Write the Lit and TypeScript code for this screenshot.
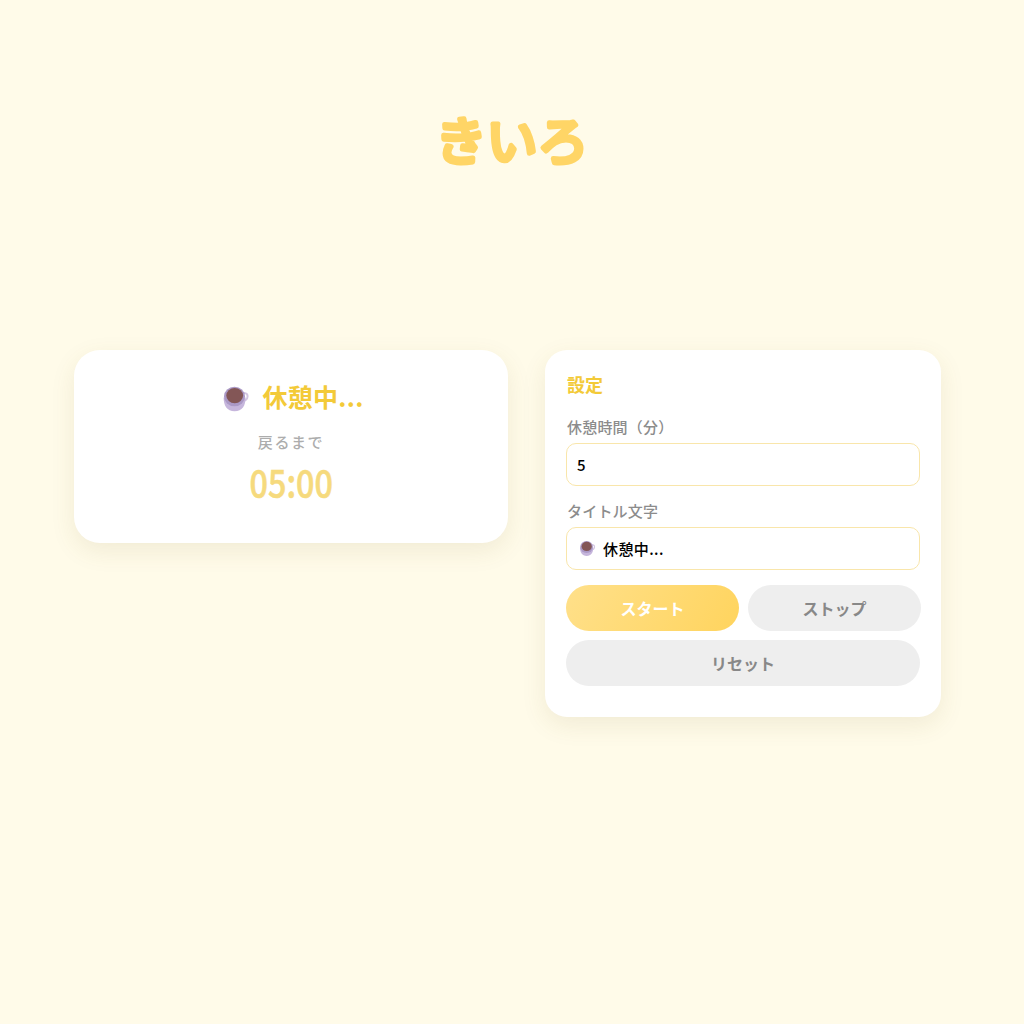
import { LitElement, html, css, svg } from "lit";
import { customElement } from "lit/decorators.js";

const cup = (cls: string) => html`<svg class=${cls} viewBox="0 0 28 28" aria-hidden="true">
  ${svg`<path d="M19 9.500c2-2.400 6.600-1.800 6.600 1.700 0 3.200-3 5.200-6.200 5.600" fill="none" stroke="#d3c6e2" stroke-width="2"/>
  <path d="M1.600 12.500c0 8 3.400 13.800 11 13.800s11-5.800 11-13.800z" fill="#c6b6dc"/>
  <ellipse cx="12.500" cy="11.500" rx="10.500" ry="9.800" fill="#ab99c6"/>
  <ellipse cx="12.700" cy="10.600" rx="8.400" ry="7.600" fill="#835656"/>`}
</svg>`;

@customElement("app-root")
export class AppRoot extends LitElement {
  static styles = css`
    :host {
      display: block;
      min-height: 1024px;
      box-sizing: border-box;
      background: #fffbe9;
      font-family: "Noto Sans CJK JP", "Noto Sans", sans-serif;
      padding: 96px 83px 0 74px;
    }
    h1 {
      margin: 0 0 168px;
      height: 86px;
      display: flex;
      justify-content: center;
      font-weight: 500;
    }
    .title {
      width: 200px;
      height: 86px;
      overflow: visible;
    }
    .title text {
      font-size: 51px;
      font-weight: 400;
      fill: #ffd566;
      stroke: #ffd566;
      stroke-width: 5px;
      stroke-linejoin: round;
      stroke-linecap: round;
      text-anchor: middle;
    }
    .row {
      display: flex;
      align-items: flex-start;
      gap: 37px;
    }
    .card {
      background: #fff;
      box-shadow: 0 8px 24px rgba(120, 100, 40, 0.1);
      box-sizing: border-box;
    }
    .timer {
      width: 434px;
      height: 193px;
      border-radius: 26px;
      padding-top: 27px;
      display: flex;
      flex-direction: column;
      align-items: center;
    }
    .status {
      display: flex;
      align-items: center;
      gap: 12px;
      height: 38px;
      margin-left: 4px;
      font-size: 25px;
      font-weight: 600;
      letter-spacing: 0.300px;
      color: #f3ca38;
    }
    .cup-lg { width: 28px; height: 28px; margin-top: 5px; }
    .until {
      margin-top: 15px;
      height: 24px;
      line-height: 24px;
      font-size: 15px;
      font-weight: 500;
      letter-spacing: 1.600px;
      color: #adadad;
    }
    .time {
      margin-top: 5px;
      height: 44px;
      line-height: 44px;
      font-size: 39px;
      font-weight: 500;
      -webkit-text-stroke: 0.600px #f6da7d;
      color: #f6da7d;
      transform: scaleX(0.83);
    }
    .settings {
      width: 396px;
      height: 367px;
      border-radius: 22px;
      padding: 22px 21px 0 21px;
    }
    h2 {
      margin: 0 0 0 1px;
      height: 24px;
      line-height: 24px;
      font-size: 18px;
      font-weight: 600;
      color: #f3ca38;
    }
    label {
      display: block;
      margin-left: 1px;
      height: 22px;
      line-height: 22px;
      font-size: 15px;
      font-weight: 500;
      letter-spacing: 0.200px;
      color: #8c8c8c;
    }
    .first { margin-top: 20px; }
    .next { margin-top: 14px; }
    .field {
      margin-top: 5px;
      width: 354px;
      height: 43px;
      box-sizing: border-box;
      border: 1px solid #f9e6ab;
      border-radius: 10px;
      padding: 0 10px;
      display: flex;
      align-items: center;
      gap: 7px;
      background: #fff;
    }
    .cup-sm { width: 17px; height: 17px; flex: none; margin-left: 2px; }
    input {
      border: none;
      outline: none;
      padding: 0;
      flex: 1;
      min-width: 0;
      background: transparent;
      font: 500 15px "Noto Sans CJK JP", sans-serif;
      letter-spacing: 0.400px;
      color: #000;
    }
    .buttons {
      margin-top: 15px;
      display: grid;
      grid-template-columns: 173px 173px;
      gap: 9px 9px;
    }
    button {
      height: 46px;
      border: none;
      border-radius: 23px;
      font: 700 16px "Noto Sans CJK JP", sans-serif;
      padding: 0;
      color: #888;
      background: #eeeeee;
    }
    .start {
      color: #fff;
      background: linear-gradient(120deg, #ffe08a, #ffd45e);
    }
    .reset { grid-column: 1 / 3; width: 354px; }
  `;

  render() {
    return html`
      <h1><svg class="title" viewBox="0 0 200 86">${svg`<text x="104" y="64">きいろ</text>`}</svg></h1>
      <div class="row">
        <section class="card timer">
          <div class="status">${cup("cup-lg")}<span>休憩中...</span></div>
          <div class="until">戻るまで</div>
          <div class="time">05:00</div>
        </section>
        <section class="card settings">
          <h2>設定</h2>
          <label class="first">休憩時間（分）</label>
          <div class="field"><input value="5" /></div>
          <label class="next">タイトル文字</label>
          <div class="field">${cup("cup-sm")}<input value="休憩中..." /></div>
          <div class="buttons">
            <button class="start">スタート</button>
            <button>ストップ</button>
            <button class="reset">リセット</button>
          </div>
        </section>
      </div>
    `;
  }
}
